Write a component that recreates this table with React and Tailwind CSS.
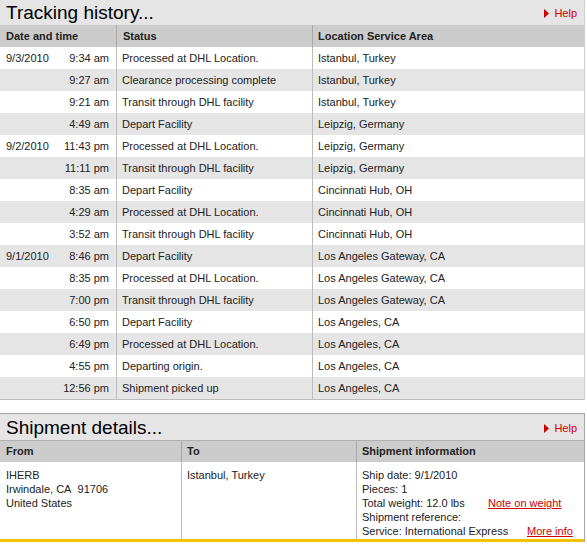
import React from 'react';

const history = [
  { date: '9/3/2010', time: '9:34 am', status: 'Processed at DHL Location.', loc: 'Istanbul, Turkey' },
  { date: '', time: '9:27 am', status: 'Clearance processing complete', loc: 'Istanbul, Turkey' },
  { date: '', time: '9:21 am', status: 'Transit through DHL facility', loc: 'Istanbul, Turkey' },
  { date: '', time: '4:49 am', status: 'Depart Facility', loc: 'Leipzig, Germany' },
  { date: '9/2/2010', time: '11:43 pm', status: 'Processed at DHL Location.', loc: 'Leipzig, Germany' },
  { date: '', time: '11:11 pm', status: 'Transit through DHL facility', loc: 'Leipzig, Germany' },
  { date: '', time: '8:35 am', status: 'Depart Facility', loc: 'Cincinnati Hub, OH' },
  { date: '', time: '4:29 am', status: 'Processed at DHL Location.', loc: 'Cincinnati Hub, OH' },
  { date: '', time: '3:52 am', status: 'Transit through DHL facility', loc: 'Cincinnati Hub, OH' },
  { date: '9/1/2010', time: '8:46 pm', status: 'Depart Facility', loc: 'Los Angeles Gateway, CA' },
  { date: '', time: '8:35 pm', status: 'Processed at DHL Location.', loc: 'Los Angeles Gateway, CA' },
  { date: '', time: '7:00 pm', status: 'Transit through DHL facility', loc: 'Los Angeles Gateway, CA' },
  { date: '', time: '6:50 pm', status: 'Depart Facility', loc: 'Los Angeles, CA' },
  { date: '', time: '6:49 pm', status: 'Processed at DHL Location.', loc: 'Los Angeles, CA' },
  { date: '', time: '4:55 pm', status: 'Departing origin.', loc: 'Los Angeles, CA' },
  { date: '', time: '12:56 pm', status: 'Shipment picked up', loc: 'Los Angeles, CA' },
];

function PanelTitle({ children, tall }) {
  return (
    <div className={`flex items-center justify-between ${tall ? 'h-[26px]' : 'h-[25px]'} bg-[#e5e5e5] pl-[6px] pr-[7px]`}>
      <span className="text-[19px] leading-none text-black">{children}</span>
      <a className="flex items-center gap-[5px] text-[11px] text-[#cc0000] mt-[2px]">
        <svg width="5" height="9" viewBox="0 0 5 9"><path d="M0 0L5 4.5L0 9Z" fill="#cc0000" /></svg>
        Help
      </a>
    </div>
  );
}

export default function App() {
  return (
    <div className="w-[587px] h-[548px] bg-white text-[#222] text-[11px] font-['Liberation_Sans','DejaVu_Sans',sans-serif] overflow-hidden">
      <div className="w-[585px] border-r border-[#cfcfcf]">
        <PanelTitle>Tracking history...</PanelTitle>
        <div className="grid grid-cols-[117px_196px_1fr] h-[22px] bg-[#cccccc] font-bold items-center">
          <div className="pl-[6px] border-r border-[#a8a8a8] h-full flex items-center">Date and time</div>
          <div className="pl-[6px] border-r border-[#a8a8a8] h-full flex items-center">Status</div>
          <div className="pl-[5px]">Location Service Area</div>
        </div>
        {history.map((r, i) => (
          <div
            key={i}
            className={`grid grid-cols-[117px_196px_1fr] h-[22px] items-center ${i % 2 ? 'bg-[#e5e5e5]' : 'bg-white'}`}
          >
            <div className="flex justify-between pl-[6px] pr-[7px] border-r border-[#bdbdbd] h-full items-center">
              <span>{r.date}</span>
              <span>{r.time}</span>
            </div>
            <div className="pl-[5px] border-r border-[#bdbdbd] h-full flex items-center">{r.status}</div>
            <div className="pl-[5px]">{r.loc}</div>
          </div>
        ))}
        <div className="border-t border-[#bdbdbd]" />
      </div>

      <div className="w-[585px] mt-[13px] border-t border-r border-[#a8a8a8]">
        <PanelTitle tall>Shipment details...</PanelTitle>
        <div className="grid grid-cols-[182px_175px_1fr] h-[22px] bg-[#cccccc] font-bold border-t border-[#b0b0b0]">
          <div className="pl-[6px] border-r border-[#a8a8a8] flex items-center">From</div>
          <div className="pl-[5px] border-r border-[#a8a8a8] flex items-center">To</div>
          <div className="pl-[5px] flex items-center">Shipment information</div>
        </div>
        <div className="grid grid-cols-[182px_175px_1fr] h-[77px] leading-[14px]">
          <div className="pl-[6px] pt-[6px] border-r border-[#bdbdbd]">
            <div>IHERB</div>
            <div>Irwindale, CA&nbsp; 91706</div>
            <div>United States</div>
          </div>
          <div className="pl-[5px] pt-[6px] border-r border-[#bdbdbd]">Istanbul, Turkey</div>
          <div className="pl-[5px] pt-[6px]">
            <div>Ship date: 9/1/2010</div>
            <div>Pieces: 1</div>
            <div className="flex">
              <span className="w-[126px]">Total weight: 12.0 lbs</span>
              <a className="text-[#cc0000] underline">Note on weight</a>
            </div>
            <div>Shipment reference:</div>
            <div className="flex">
              <span className="w-[165px]">Service: International Express</span>
              <a className="text-[#cc0000] underline">More info</a>
            </div>
          </div>
        </div>
        <div className="h-[3px] bg-[#f2c200]" />
      </div>
    </div>
  );
}
